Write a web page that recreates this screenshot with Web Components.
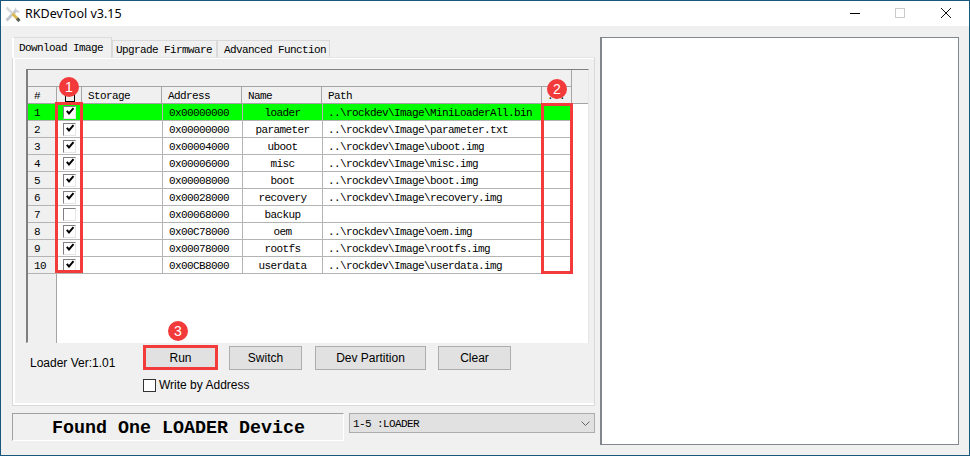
<!DOCTYPE html>
<html>
<head>
<meta charset="utf-8">
<title>RKDevTool</title>
<style>
  html, body { margin: 0; padding: 0; background: #f0f0f0; }
</style>
</head>
<body>
<rk-window title="RKDevTool v3.15">
  <rk-download-tab slot="left"></rk-download-tab>
  <rk-status slot="left" message="Found One LOADER Device" device="1-5 :LOADER"></rk-status>
</rk-window>

<script>
const MONO = `"Liberation Mono", monospace`;
const SANS = `"Liberation Sans", Arial, sans-serif`;

const PARTITIONS = [
  ["0x00000000", "loader", "..\\rockdev\\Image\\MiniLoaderAll.bin", true],
  ["0x00000000", "parameter", "..\\rockdev\\Image\\parameter.txt", true],
  ["0x00004000", "uboot", "..\\rockdev\\Image\\uboot.img", true],
  ["0x00006000", "misc", "..\\rockdev\\Image\\misc.img", true],
  ["0x00008000", "boot", "..\\rockdev\\Image\\boot.img", true],
  ["0x00028000", "recovery", "..\\rockdev\\Image\\recovery.img", true],
  ["0x00068000", "backup", "", false],
  ["0x00C78000", "oem", "..\\rockdev\\Image\\oem.img", true],
  ["0x00078000", "rootfs", "..\\rockdev\\Image\\rootfs.img", true],
  ["0x00CB8000", "userdata", "..\\rockdev\\Image\\userdata.img", true],
];

class RkWindow extends HTMLElement {
  constructor() {
    super();
    this.attachShadow({ mode: "open" });
  }

  connectedCallback() {
    this.shadowRoot.innerHTML = `
      <style>
        :host {
          display: flex;
          flex-direction: column;
          box-sizing: border-box;
          width: 970px;
          height: 456px;
          border: 1px solid #17597c;
          background: #f0f0f0;
          overflow: hidden;
        }
        .titlebar {
          display: flex;
          align-items: center;
          height: 25px;
          background: #fff;
          flex: none;
        }
        .icon { width: 16px; height: 16px; margin-left: 4px; flex: none; }
        .title {
          margin-left: 4px;
          font: 12.5px "Noto Sans", sans-serif;
          color: #000;
          flex: 1;
        }
        .controls { display: flex; height: 100%; margin-right: 1px; }
        .controls svg { width: 46px; height: 25px; display: block; }
        .body {
          display: flex;
          gap: 5px;
          padding: 11px 0 0 11px;
          flex: 1;
        }
        .left { width: 583px; display: flex; flex-direction: column; gap: 7px; }
        .preview {
          box-sizing: border-box;
          width: 359px;
          height: 408px;
          background: #fff;
          border: 1px solid #82878e;
          border-left-width: 2px;
        }
      </style>
      <div class="titlebar">
        <svg class="icon" viewBox="0 0 16 16">
          <path d="M1.5 14.5 L11.5 4" stroke="#c4c7cb" stroke-width="3"/>
          <path d="M11 1 a3.5 3.5 0 0 0 4 4 l-2 2 l-3.6-3.6z" fill="#cfd2d6"/>
          <path d="M1.5 1.5 L8 8" stroke="#d9dadc" stroke-width="2.6"/>
          <path d="M7.5 7.5 L13 13.5" stroke="#dcbb55" stroke-width="3"/>
          <path d="M12 12.4 L14.5 15" stroke="#5a5a54" stroke-width="3"/>
        </svg>
        <div class="title">${this.getAttribute("title")}</div>
        <div class="controls">
          <svg viewBox="0 0 46 25"><path d="M20 12.5 H30" stroke="#000" fill="none"/></svg>
          <svg viewBox="0 0 46 25"><rect x="19.5" y="7.5" width="9" height="9" fill="none" stroke="#ccc"/></svg>
          <svg viewBox="0 0 46 25"><path d="M19 7 L29 17 M29 7 L19 17" stroke="#111" fill="none"/></svg>
        </div>
      </div>
      <div class="body">
        <div class="left"><slot name="left"></slot></div>
        <div class="preview"></div>
      </div>
    `;
  }
}

class RkDownloadTab extends HTMLElement {
  constructor() {
    super();
    this.attachShadow({ mode: "open" });
  }

  connectedCallback() {
    this.shadowRoot.innerHTML = `
      <style>
        :host { display: block; width: 583px; }
        .tabs { display: flex; height: 20px; font: 11px ${MONO}; letter-spacing: -0.6px; color: #000; }
        .tab {
          box-sizing: border-box;
          margin-top: 3px;
          height: 17px;
          border: 1px solid #d9d9d9;
          border-bottom: 0;
          background: #f0f0f0;
          line-height: 19px;
          white-space: nowrap;
        }
        .tab.active {
          margin-top: 0;
          height: 21px;
          position: relative;
          z-index: 1;
          border-top: 1px solid #dcdcdc;
          border-left: 2px solid #fff;
          background: #f0f0f0;
          padding-left: 5px;
          line-height: 20px;
        }
        .panel {
          box-sizing: border-box;
          height: 349px;
          border: 1px solid #d9d9d9;
          border-top-color: #e6e6e6;
          background: #f0f0f0;
          box-shadow: inset 2px 0 0 #fff, inset 0 1px 0 #fff, inset 0 -2px 0 #fff;
          padding: 11px 5px 0 13px;
        }
        .controls {
          display: grid;
          grid-template-columns: 118px 1fr;
          margin-top: 3px;
        }
        .loader {
          font: 12px ${SANS};
          color: #000;
          padding: 10px 0 0 4px;
          white-space: nowrap;
        }
        .buttons { display: flex; gap: 12px; }
        .write {
          display: flex;
          align-items: center;
          gap: 3px;
          margin-top: 8px;
          margin-left: -1px;
          font: 12px ${SANS};
          color: #000;
        }
        .box { box-sizing: border-box; width: 13px; height: 13px; border: 1px solid #333; background: #fff; }
      </style>
      <div class="tabs">
        <div class="tab active" style="width:100px">Download Image</div>
        <div class="tab" style="width:105px;padding-left:3px">Upgrade Firmware</div>
        <div class="tab" style="width:113px;padding-left:6px">Advanced Function</div>
      </div>
      <div class="panel">
        <rk-list></rk-list>
        <div class="controls">
          <div class="loader">Loader Ver:1.01</div>
          <div>
            <div class="buttons">
              <rk-button width="73" marked="3">Run</rk-button>
              <rk-button width="73">Switch</rk-button>
              <rk-button width="111" style="margin-left:1px">Dev Partition</rk-button>
              <rk-button width="73">Clear</rk-button>
            </div>
            <div class="write"><span class="box"></span><span>Write by Address</span></div>
          </div>
        </div>
      </div>
    `;
  }
}

class RkList extends HTMLElement {
  constructor() {
    super();
    this.attachShadow({ mode: "open" });
  }

  connectedCallback() {
    const rows = PARTITIONS.map(([addr, name, path, on], i) => `
      <div class="row ${i === 0 ? "hot" : ""}">
        <div class="num">${i + 1}</div>
        <div class="chk"><rk-check ${on ? "checked" : ""}></rk-check></div>
        <div class="cell"></div>
        <div class="cell txt">${addr}</div>
        <div class="cell mid">${name}</div>
        <div class="cell txt path">${path}</div>
        <div class="cell"></div>
      </div>`).join("");

    this.shadowRoot.innerHTML = `
      <style>
        :host {
          display: block;
          position: relative;
          box-sizing: border-box;
          width: 563px;
          height: 274px;
          border-top: 1px solid #7f7f7f;
          border-left: 2px solid #7f7f7f;
          border-right: 1px solid #e6e6e6;
          border-bottom: 1px solid #e6e6e6;
          background: #fff;
          font: 11px ${MONO};
          letter-spacing: -0.6px;
          color: #000;
        }
        .head { background: #f0f0f0; height: 33px; border-bottom: 1px solid #a5a5a5; box-sizing: content-box; }
        .head-top { height: 17px; width: 544px; border-right: 1px solid #a5a5a5; box-sizing: border-box; border-bottom: 1px solid #a5a5a5; }
        .head-cols {
          display: grid;
          grid-template-columns: 29px 25px 80px 80px 80px 220px 30px;
          height: 16px;
          line-height: 19px;
        }
        .head-cols div { border-right: 1px solid #a5a5a5; padding-left: 6px; box-sizing: border-box; overflow: hidden; white-space: nowrap; }
        .head-cols div.hchk { padding: 5px 0 0 8px; }
        .hchk i { display: block; box-sizing: border-box; width: 10px; height: 10px; border: 1px solid #000; }
        .body {
          height: 239px;
          background: linear-gradient(to right, #f0f0f0 28px, #a5a5a5 28px, #a5a5a5 29px, #fff 29px);
        }
        .row {
          display: grid;
          grid-template-columns: 29px 25px 81px 80px 80px 220px 30px;
          width: 545px;
          height: 17px;
          line-height: 18px;
          box-sizing: border-box;
          border-bottom: 1px solid #b4b4b4;
          background: #fff;
        }
        .row.hot { background: #00ff00; }
        .row > div { box-sizing: border-box; border-right: 1px solid #b4b4b4; white-space: nowrap; overflow: hidden; }
        .num { background: #f0f0f0; padding-left: 6px; }
        .row.hot .num { background: #00ff00; }
        .row > .chk { padding: 2px 0 0 6px; border-right: 0; overflow: visible; }
        .row > .chk + .cell { border-right: 1px solid #b4b4b4; }
        .txt { padding-left: 6px; }
        .row > .path { padding-left: 5px; }
        .mid { text-align: center; }
      </style>
      <div class="head">
        <div class="head-top"></div>
        <div class="head-cols">
          <div>#</div>
          <div class="hchk"><i></i></div>
          <div>Storage</div>
          <div>Address</div>
          <div>Name</div>
          <div>Path</div>
          <div style="padding-left:5px">...</div>
        </div>
      </div>
      <div class="body">${rows}</div>
      <rk-mark style="left:27px;top:32px;width:28px;height:171px" n="1" bx="1" by="-28"></rk-mark>
      <rk-mark style="left:513px;top:33px;width:32px;height:171px" n="2" bx="3" by="-27"></rk-mark>
    `;
  }
}

class RkCheck extends HTMLElement {
  constructor() {
    super();
    this.attachShadow({ mode: "open" });
  }

  connectedCallback() {
    const tick = this.hasAttribute("checked")
      ? `<svg viewBox="0 0 11 11"><path d="M2.8 3.8 L5 6.4 L9.5 1.2" fill="none" stroke="#000" stroke-width="2"/></svg>`
      : "";
    this.shadowRoot.innerHTML = `
      <style>
        :host {
          display: block;
          box-sizing: border-box;
          width: 13px;
          height: 13px;
          border: 1px solid;
          border-color: #808080 #e6e6e6 #e6e6e6 #808080;
          background: #fff;
        }
        svg { display: block; width: 11px; height: 11px; }
      </style>
      ${tick}
    `;
  }
}

class RkBadge extends HTMLElement {
  constructor() {
    super();
    this.attachShadow({ mode: "open" });
  }

  connectedCallback() {
    this.shadowRoot.innerHTML = `
      <style>
        :host {
          display: flex;
          align-items: center;
          justify-content: center;
          position: absolute;
          width: 20px;
          height: 20px;
          border-radius: 50%;
          background: #f23a3a;
          color: #fff;
          font: 14px ${SANS};
          letter-spacing: 0;
        }
      </style>
      <slot></slot>
    `;
  }
}

class RkMark extends HTMLElement {
  constructor() {
    super();
    this.attachShadow({ mode: "open" });
  }

  connectedCallback() {
    const bx = this.getAttribute("bx");
    const by = this.getAttribute("by");
    this.shadowRoot.innerHTML = `
      <style>
        :host {
          display: block;
          position: absolute;
          box-sizing: border-box;
          border: 3px solid #f43b3b;
          z-index: 2;
        }
      </style>
      <rk-badge style="left:${bx}px;top:${by}px">${this.getAttribute("n")}</rk-badge>
    `;
  }
}

class RkButton extends HTMLElement {
  constructor() {
    super();
    this.attachShadow({ mode: "open" });
  }

  connectedCallback() {
    const marked = this.getAttribute("marked");
    this.shadowRoot.innerHTML = `
      <style>
        :host {
          display: flex;
          align-items: center;
          justify-content: center;
          position: relative;
          box-sizing: border-box;
          width: ${this.getAttribute("width")}px;
          height: 24px;
          border: 1px solid #adadad;
          background: #e1e1e1;
          font: 12px ${SANS};
          color: #000;
        }
        rk-mark { left: -2px; top: -2px; right: -2px; bottom: -1px; }
      </style>
      <slot></slot>
      ${marked ? `<rk-mark n="${marked}" bx="22" by="-27"></rk-mark>` : ""}
    `;
  }
}

class RkStatus extends HTMLElement {
  constructor() {
    super();
    this.attachShadow({ mode: "open" });
  }

  connectedCallback() {
    this.shadowRoot.innerHTML = `
      <style>
        :host { display: flex; gap: 5px; width: 583px; height: 28px; }
        .msg {
          box-sizing: border-box;
          width: 332px;
          height: 28px;
          border: 1px solid;
          border-color: #a0a0a0 #fff #fff #a0a0a0;
          font: bold 18.33px/30px ${MONO};
          text-align: center;
          color: #000;
          padding-left: 1px;
          white-space: nowrap;
          overflow: hidden;
        }
        .combo {
          display: flex;
          align-items: center;
          justify-content: space-between;
          box-sizing: border-box;
          width: 246px;
          height: 20px;
          border: 1px solid #adadad;
          background: #e1e1e1;
          font: 11px ${MONO};
          letter-spacing: -0.6px;
          color: #000;
          padding: 1px 4px 0 3px;
        }
        svg { width: 9px; height: 5px; }
      </style>
      <div class="msg">${this.getAttribute("message")}</div>
      <div class="combo">
        <span>${this.getAttribute("device")}</span>
        <svg viewBox="0 0 9 5"><path d="M0.5 0.5 L4.5 4.5 L8.5 0.5" fill="none" stroke="#666"/></svg>
      </div>
    `;
  }
}

customElements.define("rk-check", RkCheck);
customElements.define("rk-badge", RkBadge);
customElements.define("rk-mark", RkMark);
customElements.define("rk-button", RkButton);
customElements.define("rk-list", RkList);
customElements.define("rk-download-tab", RkDownloadTab);
customElements.define("rk-status", RkStatus);
customElements.define("rk-window", RkWindow);
</script>
</body>
</html>
